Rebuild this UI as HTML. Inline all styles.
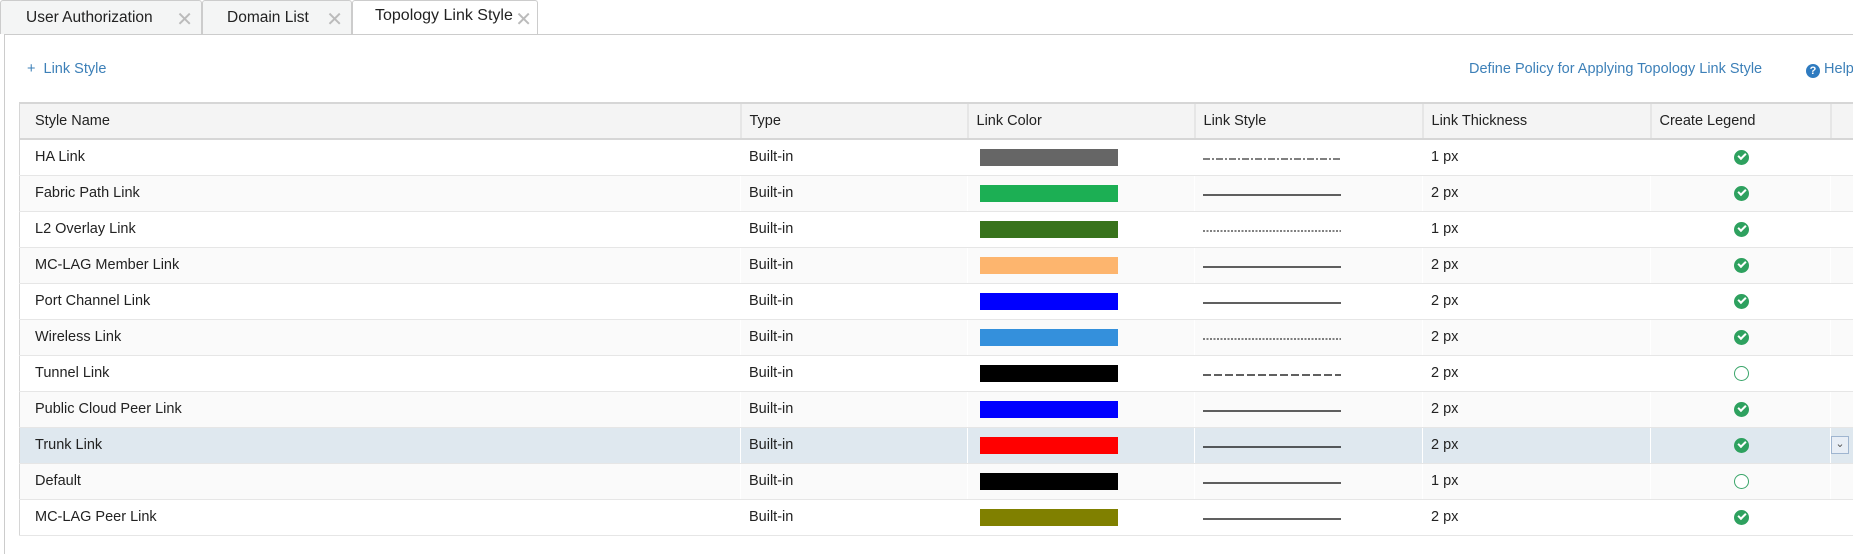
<!DOCTYPE html>
<html><head><style>
*{margin:0;padding:0;box-sizing:border-box}
body{width:1853px;height:540px;overflow:hidden;background:#fff;font-family:"Liberation Sans",sans-serif;font-size:14.5px;color:#222;position:relative}
.tab{position:absolute;top:0;height:34px;border:1px solid #ccc;border-bottom:none;background:#f4f5f5;border-radius:3px 3px 0 0;padding:8px 0 0 25px;font-size:15.5px;white-space:nowrap}
.tab .x{position:absolute;right:8px;top:6px;color:#bbb;font-size:20px;font-weight:300}
.tab.active{background:#fff;height:35px;font-size:16px;padding-top:6px}
.bar{position:absolute;top:34px;left:4px;right:0;border-top:1px solid #ccc;border-left:1px solid #ccc;height:520px}
a{color:#3d80b8;text-decoration:none;position:absolute;white-space:nowrap}
table{position:absolute;left:19px;top:102px;border-collapse:collapse;table-layout:fixed;width:1834px}
th{background:#f4f4f4;font-weight:normal;text-align:left;height:36px;padding-left:8px;border-top:2px solid #d6d6d6;border-bottom:2px solid #d6d6d6;border-left:2px solid #e6e6e6}
th:first-child,td:first-child{padding-left:15px}
th:first-child{border-left:1px solid #d6d6d6}
td{height:36px;padding-left:8px;border-bottom:1px solid #e6e6e6;border-left:1px solid #fff}
td:first-child{border-left:1px solid #d6d6d6}
tr:nth-child(odd) td{background:#fafafa}
tr.sel td{background:#dfe8ef}
.sw{width:138px;height:17px;margin-left:4px}
.ck{display:block;width:15px;height:15px;border-radius:50%;background:#2ea15f;margin-left:75px;position:relative}
.ck::after{content:"";position:absolute;left:4px;top:3px;width:6px;height:3px;border-left:2px solid #fff;border-bottom:2px solid #fff;transform:rotate(-45deg)}
.ck.o{background:#fff;border:1.5px solid #3aa56a}
.ck.o::after{display:none}
</style></head><body>
<div class="tab" style="left:0;width:202px">User Authorization<span class="x">✕</span></div>
<div class="tab" style="left:202px;width:150px;padding-left:24px">Domain List<span class="x">✕</span></div>
<div class="tab active" style="left:352px;width:186px;padding-left:22px">Topology Link Style<span class="x" style="right:5px">✕</span></div>
<div class="bar"></div>
<a style="left:27px;top:61px;font-size:14.5px">+&nbsp; Link Style</a>
<a style="left:1469px;top:61px;font-size:14.5px">Define Policy for Applying Topology Link Style</a>
<a style="left:1806px;top:61px;font-size:14.5px"><span style="display:inline-block;width:14px;height:14px;border-radius:50%;background:#2f7bc0;color:#fff;font-size:11px;font-weight:bold;text-align:center;line-height:14px;vertical-align:-1px">?</span> Help</a>
<table>
<colgroup><col style="width:721px"><col style="width:227px"><col style="width:227px"><col style="width:228px"><col style="width:228px"><col style="width:180px"><col></colgroup>
<tr><th>Style Name</th><th>Type</th><th>Link Color</th><th>Link Style</th><th>Link Thickness</th><th>Create Legend</th><th></th></tr>
<tr><td>HA Link</td><td>Built-in</td><td><div class="sw" style="background:#666"></div></td><td><svg width="140" height="4"><line x1="0" y1="2" x2="138" y2="2" stroke="#000" stroke-width="1" stroke-dasharray="7,2,2,2"/></svg></td><td>1 px</td><td><span class="ck"></span></td><td></td></tr>
<tr><td>Fabric Path Link</td><td>Built-in</td><td><div class="sw" style="background:#1caf54"></div></td><td><svg width="140" height="4"><line x1="0" y1="2" x2="138" y2="2" stroke="#000" stroke-width="1.3"/></svg></td><td>2 px</td><td><span class="ck"></span></td><td></td></tr>
<tr><td>L2 Overlay Link</td><td>Built-in</td><td><div class="sw" style="background:#38731c"></div></td><td><svg width="140" height="4"><line x1="0" y1="2" x2="138" y2="2" stroke="#000" stroke-width="1" stroke-dasharray="2,1.5"/></svg></td><td>1 px</td><td><span class="ck"></span></td><td></td></tr>
<tr><td>MC-LAG Member Link</td><td>Built-in</td><td><div class="sw" style="background:#fdb56e"></div></td><td><svg width="140" height="4"><line x1="0" y1="2" x2="138" y2="2" stroke="#000" stroke-width="1.3"/></svg></td><td>2 px</td><td><span class="ck"></span></td><td></td></tr>
<tr><td>Port Channel Link</td><td>Built-in</td><td><div class="sw" style="background:#0000ff"></div></td><td><svg width="140" height="4"><line x1="0" y1="2" x2="138" y2="2" stroke="#000" stroke-width="1.3"/></svg></td><td>2 px</td><td><span class="ck"></span></td><td></td></tr>
<tr><td>Wireless Link</td><td>Built-in</td><td><div class="sw" style="background:#3490dc"></div></td><td><svg width="140" height="4"><line x1="0" y1="2" x2="138" y2="2" stroke="#000" stroke-width="1" stroke-dasharray="2,1.5"/></svg></td><td>2 px</td><td><span class="ck"></span></td><td></td></tr>
<tr><td>Tunnel Link</td><td>Built-in</td><td><div class="sw" style="background:#000"></div></td><td><svg width="140" height="4"><line x1="0" y1="2" x2="138" y2="2" stroke="#000" stroke-width="1.3" stroke-dasharray="8,3"/></svg></td><td>2 px</td><td><span class="ck o"></span></td><td></td></tr>
<tr><td>Public Cloud Peer Link</td><td>Built-in</td><td><div class="sw" style="background:#0000ff"></div></td><td><svg width="140" height="4"><line x1="0" y1="2" x2="138" y2="2" stroke="#000" stroke-width="1.3"/></svg></td><td>2 px</td><td><span class="ck"></span></td><td></td></tr>
<tr class="sel"><td>Trunk Link</td><td>Built-in</td><td><div class="sw" style="background:#ff0000"></div></td><td><svg width="140" height="4"><line x1="0" y1="2" x2="138" y2="2" stroke="#000" stroke-width="1.3"/></svg></td><td>2 px</td><td><span class="ck"></span></td><td style="padding-left:0"><div style="width:18px;height:18px;border:1px solid #9fb5d0;background:#e8eef6;text-align:center;line-height:14px;font-size:11px;color:#555">&#8964;</div></td></tr>
<tr><td>Default</td><td>Built-in</td><td><div class="sw" style="background:#000"></div></td><td><svg width="140" height="4"><line x1="0" y1="2" x2="138" y2="2" stroke="#000" stroke-width="1.3"/></svg></td><td>1 px</td><td><span class="ck o"></span></td><td></td></tr>
<tr><td>MC-LAG Peer Link</td><td>Built-in</td><td><div class="sw" style="background:#808000"></div></td><td><svg width="140" height="4"><line x1="0" y1="2" x2="138" y2="2" stroke="#000" stroke-width="1.3"/></svg></td><td>2 px</td><td><span class="ck"></span></td><td></td></tr>
</table>
</body></html>
